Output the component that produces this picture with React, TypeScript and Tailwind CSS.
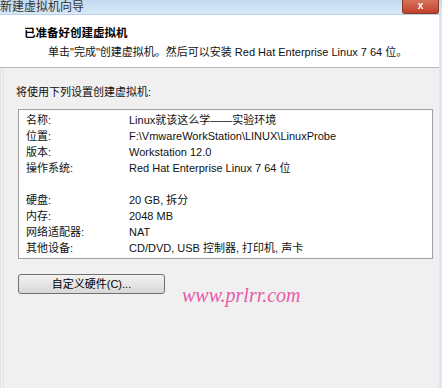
import React from 'react';

const rows1 = [
  ['名称:', 'Linux就该这么学——实验环境'],
  ['位置:', 'F:\\VmwareWorkStation\\LINUX\\LinuxProbe'],
  ['版本:', 'Workstation 12.0'],
  ['操作系统:', 'Red Hat Enterprise Linux 7 64 位'],
];

const rows2 = [
  ['硬盘:', '20 GB, 拆分'],
  ['内存:', '2048 MB'],
  ['网络适配器:', 'NAT'],
  ['其他设备:', 'CD/DVD, USB 控制器, 打印机, 声卡'],
];

const Row = ({ label, value }: { label: string; value: string }) => (
  <div className="flex h-[16px] items-center">
    <div className="w-[103px]">{label}</div>
    <div>{value}</div>
  </div>
);

export default function App() {
  return (
    <div
      className="relative h-[388px] w-[442px] overflow-hidden bg-[#f0f0f0] text-[11px] text-[#1a1a1a]"
      style={{ fontFamily: '"Liberation Sans", "Noto Sans CJK SC", sans-serif' }}
    >
      {/* title bar */}
      <div className="flex h-[15px] items-end justify-between bg-gradient-to-b from-[#c2d9ef] to-[#d9e9f7] border-b border-[#b9d1ea]">
        <div className="-mt-[6px] leading-[14px] text-[12px] text-[#333]">新建虚拟机向导</div>
        <div className="mr-[3px] h-[15px] w-[37px] rounded-b-[3px] border border-t-0 border-[#8a3a2a] bg-gradient-to-b from-[#d8765e] to-[#c0402a] flex items-center justify-center text-white text-[10px] font-bold leading-none">
          x
        </div>
      </div>

      {/* header */}
      <div className="h-[53px] bg-white border-b border-[#b8b8b8] pl-[24px] pt-[10px]">
        <div className="font-bold leading-[16px] text-[11.5px] text-black">已准备好创建虚拟机</div>
        <div className="pl-[24px] pt-[3px] leading-[16px] text-[#111]">
          单击"完成"创建虚拟机。然后可以安装 Red Hat Enterprise Linux 7 64 位。
        </div>
      </div>

      {/* body */}
      <div className="pl-[16px] pr-[9px] pt-[16px]">
        <div className="leading-[16px] text-[#111]">将使用下列设置创建虚拟机:</div>
        <div className="mt-[9px] ml-[2px] h-[150px] border border-[#a0a0a0] bg-white pl-[7px] pt-[2px] text-[#111]">
          {rows1.map(([l, v]) => (
            <Row key={l} label={l} value={v} />
          ))}
          <div className="h-[16px]" />
          {rows2.map(([l, v]) => (
            <Row key={l} label={l} value={v} />
          ))}
        </div>
        <div className="mt-[15px] flex items-start">
          <button className="ml-[2px] h-[20px] w-[147px] rounded-[3px] border border-[#707070] bg-gradient-to-b from-[#f2f2f2] to-[#d8d8d8] text-[11px] leading-[17px] text-black">
            自定义硬件(C)...
          </button>
          <div
            className="ml-[17px] mt-[6px] text-[20px] italic text-[#e85aa8]"
            style={{ fontFamily: '"Liberation Serif", serif' }}
          >
            www.prlrr.com
          </div>
        </div>
      </div>

      {/* window edges */}
      <div className="absolute right-0 top-[15px] h-[373px] w-[3px] bg-[#dce9f5]" />
      <div className="absolute left-[0px] top-[69px] h-[319px] w-[4px] border-l border-r border-[#e4e4e4]" />
    </div>
  );
}
